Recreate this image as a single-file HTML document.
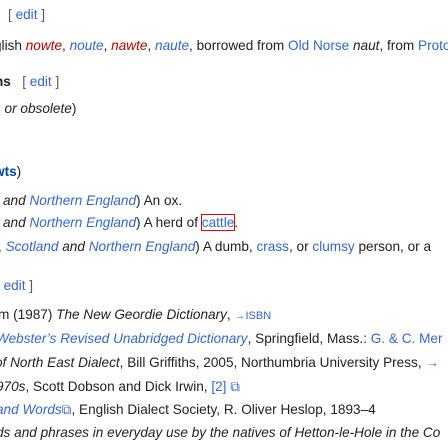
<!DOCTYPE html>
<html><head><style>
body{margin:0;width:448px;height:448px;overflow:hidden;background:#fff;font-family:"Liberation Sans",Arial,sans-serif;font-size:13.6px;color:#202122;position:relative}
.l{position:absolute;white-space:nowrap;line-height:16px}
a{color:#3366cc;text-decoration:none}
.r{color:#ba0000}
.e{color:#54595d}
i{font-style:italic}
</style></head><body>
<div class="l" style="left:8px;top:7px"><span class="e">[</span> <a>edit</a> <span class="e">]</span></div>
<div class="l" style="left:-6px;top:38px">glish <i class="r">nowte</i>, <a><i>noute</i></a>, <i class="r">nawte</i>, <a><i>naute</i></a>, borrowed from <a>Old Norse</a> <i>naut</i>, from <a>Proto</a></div>
<div class="l" style="left:-5px;top:74px"><b>ns</b> &nbsp;&nbsp;<span class="e">[</span> <a>edit</a> <span class="e">]</span></div>
<div class="l" style="left:-3px;top:101px"><i><a>,</a> or obsolete</i>)</div>
<div class="l" style="left:-6px;top:164px"><b><a style="color:#0645ad">wts</a></b>)</div>
<div class="l" style="left:3px;top:193px"><i>and <a>Northern England</a></i>) An ox.</div>
<div class="l" style="left:3px;top:215px"><i>and <a>Northern England</a></i>) A herd of <a style="outline:1px solid #e00;outline-offset:0">cattle</a>.</div>
<div class="l" style="left:-2px;top:239px"><a>,</a> <i><a>Scotland</a> and <a>Northern England</a></i>) A dumb, <a>crass</a>, or <a>clumsy</a> person, or a</div>
<div class="l" style="left:-4px;top:278px"><span class="e">[</span> <a>edit</a> <span class="e">]</span></div>
<div class="l" style="left:-2px;top:307px">m (1987) <i>The New Geordie Dictionary</i>, <a style="font-size:11px">→ISBN</a></div>
<div class="l" style="left:-4px;top:331px"><a><i>Webster’s Revised Unabridged Dictionary</i></a>, Springfield, Mass.: <a>G. &amp; C. Mer</a></div>
<div class="l" style="left:-5px;top:355px"><i>of North East Dialect</i>, Bill Griffiths, 2005, Northumbria University Press, <a>→</a></div>
<div class="l" style="left:-4px;top:379px"><i>970s</i>, Scott Dobson and Dick Irwin, <a>[2]</a> <a>⧉</a></div>
<div class="l" style="left:-4px;top:402px"><a><i>and Words</i>⧉</a>, English Dialect Society, R. Oliver Heslop, 1893–4</div>
<div class="l" style="left:-4px;top:425px"><i>ds and phrases in everyday use by the natives of Hetton-le-Hole in the Co</i></div>
</body></html>
